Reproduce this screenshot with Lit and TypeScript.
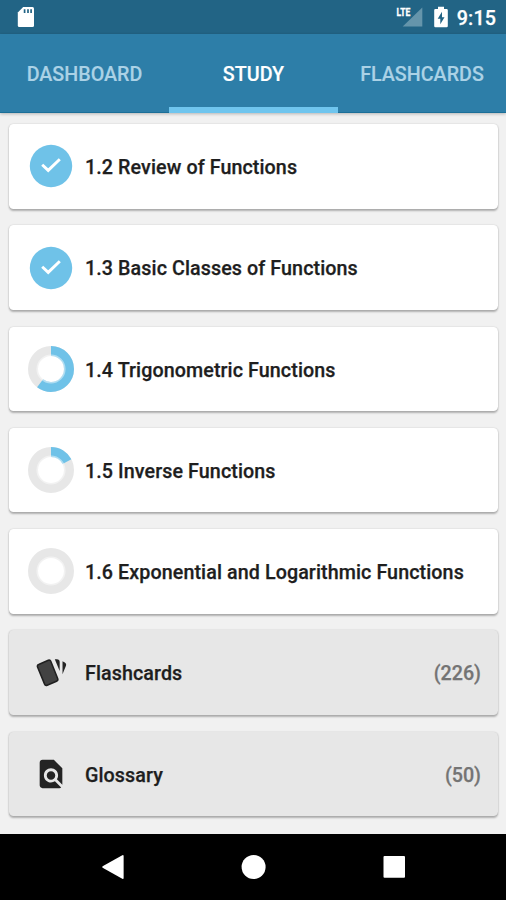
import { LitElement, html, css, svg } from "lit";
import { customElement, property } from "lit/decorators.js";

@customElement("progress-ring")
class ProgressRing extends LitElement {
  @property({ type: Number }) value = 0;

  static styles = css`
    :host, svg { display: block; width: 46px; height: 46px; }
    circle { fill: none; stroke-width: 10; }
    .track { stroke: #e7e7e7; }
    .bar { stroke: #6fc2e8; }
    .soft { stroke: #fff; stroke-width: 2; opacity: 0.45; }
    .disc { fill: #6fc2e8; }
    .check { fill: none; stroke: #fff; stroke-width: 2.9; }
  `;

  render() {
    if (this.value >= 1) {
      return html`<svg viewBox="0 0 46 46">
        <circle class="disc" cx="23" cy="23" r="21.2"></circle>
        <path class="check" d="M14.2 21.8L20.2 27.4L31.8 16.2"></path>
      </svg>`;
    }
    const length = 2 * Math.PI * 18;
    return html`<svg viewBox="0 0 46 46">
      <circle class="track" cx="23" cy="23" r="18"></circle>
      ${this.value > 0
        ? svg`<circle class="bar" cx="23" cy="23" r="18" transform="rotate(-90 23 23)"
            stroke-dasharray="${length * this.value} ${length}"></circle>`
        : null}
      <circle class="soft" cx="23" cy="23" r="13.6"></circle>
    </svg>`;
  }
}

const cardsIcon = svg`<path d="M21.47,4.35L20.13,3.79V12.82L22.56,6.96C22.97,5.94 22.5,4.77 21.47,4.35M18.12,4.25A2,2 0 0,0 16.12,2.25H14.67L18.12,10.59"/>
  <path class="lined" d="M2.5,7.8L7.4,19.7C7.7,20.5 8.5,20.9 9.3,20.6L15.9,17.8C16.7,17.5 17,16.7 16.7,15.9L11.9,3.9C11.6,3.1 10.9,2.7 10.1,3L3.3,6C2.5,6.3 2.2,7.1 2.5,7.8Z"/>`;

const findIcon = svg`<path d="M20 19.59V8l-6-6H6c-1.1 0-1.99.9-1.99 2L4 20c0 1.1.89 2 1.99 2H18c.45 0 .85-.15 1.19-.4l-4.43-4.43c-.8.52-1.74.83-2.76.83-2.76 0-5-2.24-5-5s2.24-5 5-5 5 2.24 5 5c0 1.02-.31 1.96-.83 2.75L20 19.59zM9 13c0 1.66 1.34 3 3 3s3-1.34 3-3-1.34-3-3-3-3 1.34-3 3z"/>`;

@customElement("app-root")
class AppRoot extends LitElement {
  private lessons = [
    { title: "1.2 Review of Functions", value: 1 },
    { title: "1.3 Basic Classes of Functions", value: 1 },
    { title: "1.4 Trigonometric Functions", value: 0.6 },
    { title: "1.5 Inverse Functions", value: 0.172 },
    { title: "1.6 Exponential and Logarithmic Functions", value: 0 },
  ];

  private tools = [
    { title: "Flashcards", count: 226, icon: cardsIcon },
    { title: "Glossary", count: 50, icon: findIcon },
  ];

  static styles = css`
    :host {
      display: flex;
      flex-direction: column;
      height: 900px;
      overflow: hidden;
      background: #f1f1f1;
      font-family: Roboto, sans-serif;
      font-weight: 500;
      font-size: 19.7px;
      -webkit-text-stroke: 0.25px currentColor;
    }
    .status {
      box-sizing: border-box;
      height: 34px;
      flex: none;
      display: flex;
      align-items: center;
      padding: 0 10px 0 17px;
      background: #226485;
      color: #fff;
    }
    .status svg { display: block; }
    .sd { margin-right: auto; }
    .battery { margin: 0 9px 0 11px; }
    .tag { fill: #fff; stroke: #fff; stroke-width: 0.3px; font: 700 10.5px Roboto, sans-serif; }
    .clock { line-height: 34px; padding-top: 3px; letter-spacing: 0.1px; }
    .tabs {
      box-sizing: border-box;
      height: 79px;
      flex: none;
      display: grid;
      grid-template-columns: 169px 169px 1fr;
      background: #2d7ea8;
      border-bottom: 1px solid #1b6f98;
      box-shadow: 0 1px 3px rgba(0, 0, 0, 0.25);
    }
    .tab {
      box-sizing: border-box;
      height: 79px;
      display: flex;
      align-items: center;
      justify-content: center;
      padding-top: 8px;
      border-bottom: 6px solid transparent;
      color: #abd2e6;
      -webkit-text-stroke-width: 0.15px;
    }
    .tab.active { color: #fff; border-bottom-color: #6fc5ee; }
    .list {
      flex: 1;
      display: flex;
      flex-direction: column;
      gap: 16.7px;
      padding: 11px 8px 0 9px;
    }
    .card {
      box-sizing: border-box;
      height: 84.6px;
      flex: none;
      display: flex;
      align-items: center;
      padding: 0 17px 0 19px;
      background: #fff;
      border-radius: 4.5px;
      box-shadow: 0 1.5px 2px rgba(0, 0, 0, 0.27), 0 0 2px rgba(0, 0, 0, 0.12);
      color: #1e1e1e;
    }
    .card.tool { background: #e7e7e7; }
    .title {
      margin-left: 11px;
      padding-top: 2.4px;
      flex: 1;
      white-space: nowrap;
      letter-spacing: 0.09px;
    }
    .count { color: #747474; padding-top: 2.4px; }
    .glyph { width: 34px; height: 34px; margin: 0 6px; fill: #242424; }
    .lined { fill: #424242; stroke: #202020; stroke-width: 1.1; }
    .nav {
      height: 66.5px;
      flex: none;
      display: flex;
      align-items: center;
      justify-content: space-between;
      padding: 0 100px 0 101px;
      background: #000;
    }
    .nav svg { fill: #fff; display: block; }
  `;

  render() {
    return html`
      <div class="status">
        <svg class="sd" width="18" height="22" viewBox="0 0 18 22">
          <path fill="#fff" d="M6.2 1H15.5Q17 1 17 2.5V19.5Q17 21 15.5 21H2.3Q.8 21 .8 19.5V6.6Z"/>
          <path stroke="#226485" stroke-width="1.7" d="M7.6 3.2V7M11 3.2V7M14.1 3.2V7"/>
        </svg>
        <svg width="27" height="22" viewBox="0 0 27 22">
          <path fill="#6595ab" d="M26.3 1.5V20.5H6.7Z"/>
          <text class="tag" x="0.6" y="9.8" textLength="13.8" lengthAdjust="spacingAndGlyphs">LTE</text>
        </svg>
        <svg class="battery" width="14" height="22" viewBox="0 0 14 22">
          <path fill="#fff" d="M4 .7H10V3H12.6Q13.8 3 13.8 4.2V20Q13.8 21.2 12.6 21.2H1.4Q.2 21.2 .2 20V4.2Q.2 3 1.4 3H4Z"/>
          <path fill="#226485" d="M8 5.8L3.7 12.8H6.3V18.2L10.5 11.2H8Z"/>
        </svg>
        <div class="clock">9:15</div>
      </div>
      <div class="tabs">
        <div class="tab">DASHBOARD</div>
        <div class="tab active">STUDY</div>
        <div class="tab">FLASHCARDS</div>
      </div>
      <div class="list">
        ${this.lessons.map(
          (l) => html`<div class="card">
            <progress-ring .value=${l.value}></progress-ring>
            <div class="title">${l.title}</div>
          </div>`
        )}
        ${this.tools.map(
          (t) => html`<div class="card tool">
            <svg class="glyph" viewBox="0 0 24 24">${t.icon}</svg>
            <div class="title">${t.title}</div>
            <div class="count">(${t.count})</div>
          </div>`
        )}
      </div>
      <div class="nav">
        <svg width="24" height="26" viewBox="0 0 24 26"><path d="M1.6 12.2Q.8 13 1.6 13.8L21.3 24.7Q22.6 25.3 22.6 24V2Q22.6.7 21.3 1.3Z"/></svg>
        <svg width="26" height="26" viewBox="0 0 26 26"><circle cx="12.6" cy="13" r="12"/></svg>
        <svg width="24" height="24" viewBox="0 0 24 24"><rect x="1.5" y="1" width="21.5" height="21.8" rx="1"/></svg>
      </div>
    `;
  }
}
